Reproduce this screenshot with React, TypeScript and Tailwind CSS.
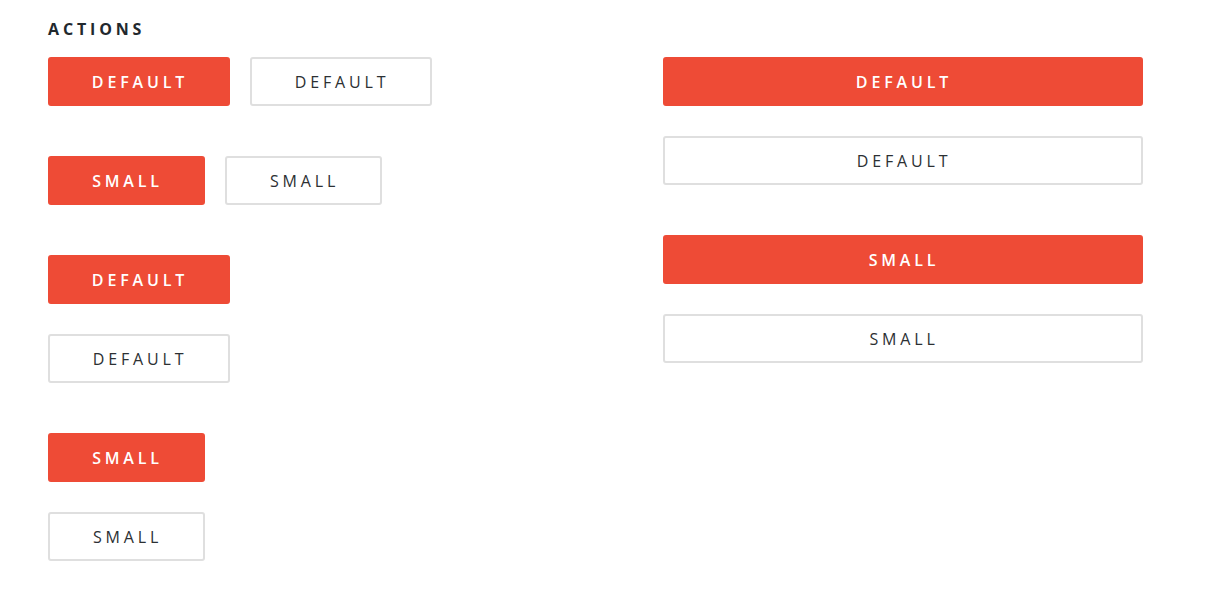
const font = { fontFamily: '"Open Sans", "Liberation Sans", sans-serif' };

function Btn({ label, filled, small, block }: { label: string; filled?: boolean; small?: boolean; block?: boolean }) {
  const width = block ? "w-[480px]" : small ? "w-[157px]" : "w-[182px]";
  const look = filled
    ? "bg-[#ee4b36] border-[#ee4b36] text-white font-semibold"
    : "bg-white border-[#dfdfdf] text-[#2c3033] font-normal";
  return (
    <button
      className={`${width} ${look} h-[49px] border-2 rounded-[3px] text-[16px] tracking-[0.24em] pl-[2px] flex items-center justify-center`}
    >
      {label}
    </button>
  );
}

export default function App() {
  return (
    <div className="bg-white w-[1222px] h-[596px] px-[48px] pt-[18px]" style={font}>
      <h2 className="text-[16px] font-bold tracking-[0.24em] text-[#22282d] leading-[22px]">ACTIONS</h2>
      <div className="flex mt-[17px]">
        <div className="w-[615px] flex flex-col">
          <div className="flex gap-[20px]">
            <Btn label="DEFAULT" filled />
            <Btn label="DEFAULT" />
          </div>
          <div className="flex gap-[20px] mt-[50px]">
            <Btn label="SMALL" filled small />
            <Btn label="SMALL" small />
          </div>
          <div className="flex flex-col gap-[30px] mt-[50px]">
            <Btn label="DEFAULT" filled />
            <Btn label="DEFAULT" />
          </div>
          <div className="flex flex-col gap-[30px] mt-[50px]">
            <Btn label="SMALL" filled small />
            <Btn label="SMALL" small />
          </div>
        </div>
        <div className="flex flex-col">
          <div className="flex flex-col gap-[30px]">
            <Btn label="DEFAULT" filled block />
            <Btn label="DEFAULT" block />
          </div>
          <div className="flex flex-col gap-[30px] mt-[50px]">
            <Btn label="SMALL" filled block />
            <Btn label="SMALL" block />
          </div>
        </div>
      </div>
    </div>
  );
}
